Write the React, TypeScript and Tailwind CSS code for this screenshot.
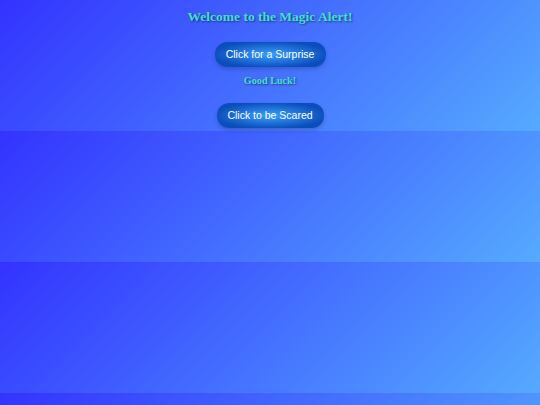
const App = () => {
  return (
    <div className="h-[405px] w-full bg-[linear-gradient(135deg,#3333ff,#55aaff)] bg-size-[100%_131px] bg-repeat">
      <div className="flex flex-col items-center pt-[9px]">
        <h1 className="font-['Liberation_Serif',serif] font-bold text-[13.5px] leading-[16px] text-[#40e0d0] [text-shadow:1px_1px_2px_rgba(0,0,0,0.5)]">
          Welcome to the Magic Alert!
        </h1>
        <button className="mt-[17px] h-[25px] w-[111px] rounded-[12px] bg-[radial-gradient(ellipse,#3aa0ff,#0a4dbb_75%)] font-['Liberation_Sans',sans-serif] text-[10.5px] text-white shadow-[0_2px_4px_rgba(0,0,0,0.2)]">
          Click for a Surprise
        </button>
        <p className="mt-[8px] font-['Liberation_Serif',serif] font-bold text-[10.2px] leading-[12px] text-[#40e0d0] [text-shadow:1px_1px_2px_rgba(0,0,0,0.5)]">
          Good Luck!
        </p>
        <button className="mt-[16px] h-[25px] w-[107px] rounded-[12px] bg-[radial-gradient(ellipse,#3aa0ff,#0a4dbb_75%)] font-['Liberation_Sans',sans-serif] text-[10.5px] text-white shadow-[0_2px_4px_rgba(0,0,0,0.2)]">
          Click to be Scared
        </button>
      </div>
    </div>
  );
};

export default App;
